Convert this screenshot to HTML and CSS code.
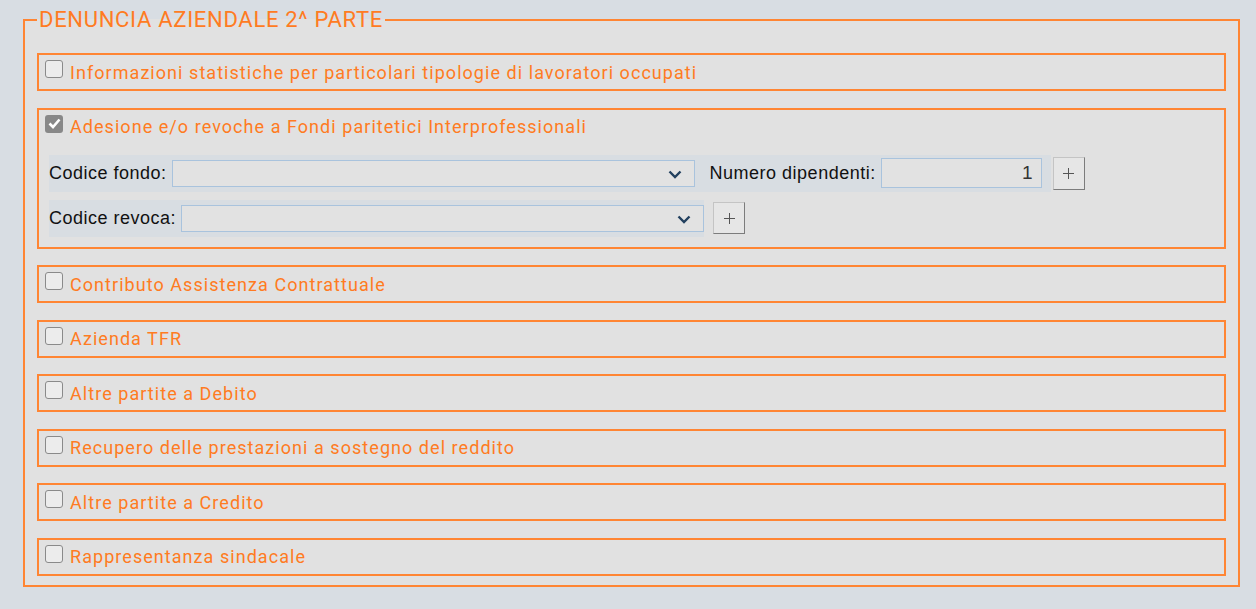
FILE: index.html
```html
<!DOCTYPE html>
<html lang="it">

<head>
  <meta charset="UTF-8">
  <meta name="viewport" content="width=device-width, initial-scale=1.0">
  <title>Denuncia aziendale 2^ parte</title>
  <link rel="stylesheet" href="styles.css">
</head>

<body>
  <div class="page">
    <fieldset class="panel">
      <legend>DENUNCIA AZIENDALE 2^ PARTE</legend>

      <div class="section">
        <label class="head"><span class="cb"></span>Informazioni statistiche per particolari tipologie di lavoratori occupati</label>
      </div>

      <div class="section">
        <label class="head"><span class="cb checked"><svg viewBox="0 0 17 17" width="17" height="17"><path d="M3.5 8.5 L7 12 L13.5 4.5" fill="none" stroke="#fff" stroke-width="2.6"/></svg></span>Adesione e/o revoche a Fondi paritetici Interprofessionali</label>

        <div class="row">
          <div class="group group-wide">
            <span class="lbl">Codice fondo:</span>
            <div class="select sel-fondo">
              <svg class="chev" viewBox="0 0 14 9" width="14" height="9"><path d="M1.5 1.5 L7 7 L12.5 1.5" fill="none" stroke="#22405f" stroke-width="2.4"/></svg>
            </div>
            <span class="lbl">Numero dipendenti:</span>
            <div class="num">1</div>
          </div>
          <button class="plus plus-near" type="button"><svg viewBox="0 0 11 11" width="11" height="11"><path d="M5.5 0 V11 M0 5.5 H11" stroke="#555" stroke-width="1"/></svg></button>
        </div>

        <div class="row row-last">
          <div class="group">
            <span class="lbl">Codice revoca:</span>
            <div class="select sel-revoca">
              <svg class="chev" viewBox="0 0 14 9" width="14" height="9"><path d="M1.5 1.5 L7 7 L12.5 1.5" fill="none" stroke="#22405f" stroke-width="2.4"/></svg>
            </div>
          </div>
          <button class="plus" type="button"><svg viewBox="0 0 11 11" width="11" height="11"><path d="M5.5 0 V11 M0 5.5 H11" stroke="#555" stroke-width="1"/></svg></button>
        </div>
      </div>

      <div class="section">
        <label class="head"><span class="cb"></span>Contributo Assistenza Contrattuale</label>
      </div>
      <div class="section">
        <label class="head"><span class="cb"></span>Azienda TFR</label>
      </div>
      <div class="section">
        <label class="head"><span class="cb"></span>Altre partite a Debito</label>
      </div>
      <div class="section">
        <label class="head"><span class="cb"></span>Recupero delle prestazioni a sostegno del reddito</label>
      </div>
      <div class="section">
        <label class="head"><span class="cb"></span>Altre partite a Credito</label>
      </div>
      <div class="section">
        <label class="head"><span class="cb"></span>Rappresentanza sindacale</label>
      </div>
    </fieldset>
  </div>
</body>

</html>
```

FILE: styles.css
```css
body {
  margin: 0;
  padding: 0;
  background-color: #d8dde3;
  font-family: "Liberation Sans", Arial, sans-serif;
}

.page {
  padding: 8px 16px 0 23px;
}

.panel {
  margin: 0;
  padding: 21px 12px 9px 12px;
  border: 2px solid #ff8533;
  background-color: #e1e1e1;
  min-width: 0;
}

.panel legend {
  padding: 0 2px;
  margin-left: 0;
  font-family: Roboto, sans-serif;
  font-size: 22px;
  letter-spacing: 0.7px;
  line-height: 24px;
  color: #ff7b22;
}

.section {
  border: 2px solid #ff8533;
  padding: 6px 8px 6px 6px;
  margin-bottom: 16.5px;
}

.section:last-child {
  margin-bottom: 0;
}

.head {
  display: flex;
  align-items: center;
  height: 22px;
  font-family: Roboto, sans-serif;
  font-size: 18px;
  letter-spacing: 1.05px;
  color: #ff7b22;
}

.cb {
  align-self: flex-start;
  margin-top: -1px;
  margin-right: 7px;
  width: 16px;
  height: 16px;
  border: 1px solid #8a8a8a;
  border-radius: 3px;
  background-color: #ececec;
  flex: none;
}

.cb.checked {
  width: 18px;
  height: 18px;
  border: none;
  background-color: #888;
}

.cb svg {
  display: block;
  margin: 0.5px;
}

.row {
  display: flex;
  align-items: center;
  margin: 17px 0 0 4px;
}

.row + .row {
  margin-top: 8px;
}

.row-last {
  margin-bottom: 4px;
}

.group {
  display: flex;
  align-items: center;
  height: 37px;
  background-color: #d8dde2;
}

.group-wide {
  padding-right: 9px;
}

.lbl {
  font-size: 18px;
  letter-spacing: 0.5px;
  color: #111;
  margin-right: 5px;
  white-space: nowrap;
}

.select {
  position: relative;
  height: 25px;
  width: 521px;
  border: 1px solid #a9c3dd;
  background-color: #e2e2e2;
}

.sel-fondo {
  margin-right: 15px;
}

.chev {
  position: absolute;
  right: 12px;
  top: 9px;
}

.num {
  width: 151px;
  height: 28px;
  padding-right: 8px;
  border: 1px solid #a9c3dd;
  background-color: #e2e2e2;
  text-align: right;
  font-size: 19px;
  line-height: 28px;
  color: #333;
}

.plus {
  width: 32px;
  height: 32px;
  margin-left: 9px;
  padding: 0;
  border: 1px solid #c4c4c4;
  border-right-color: #7c7c7c;
  border-bottom-color: #7c7c7c;
  background-color: #e6e6e6;
  display: flex;
  align-items: center;
  justify-content: center;
}

.plus-near {
  margin-left: 2px;
  height: 33px;
}

.plus svg {
  display: block;
}
```
